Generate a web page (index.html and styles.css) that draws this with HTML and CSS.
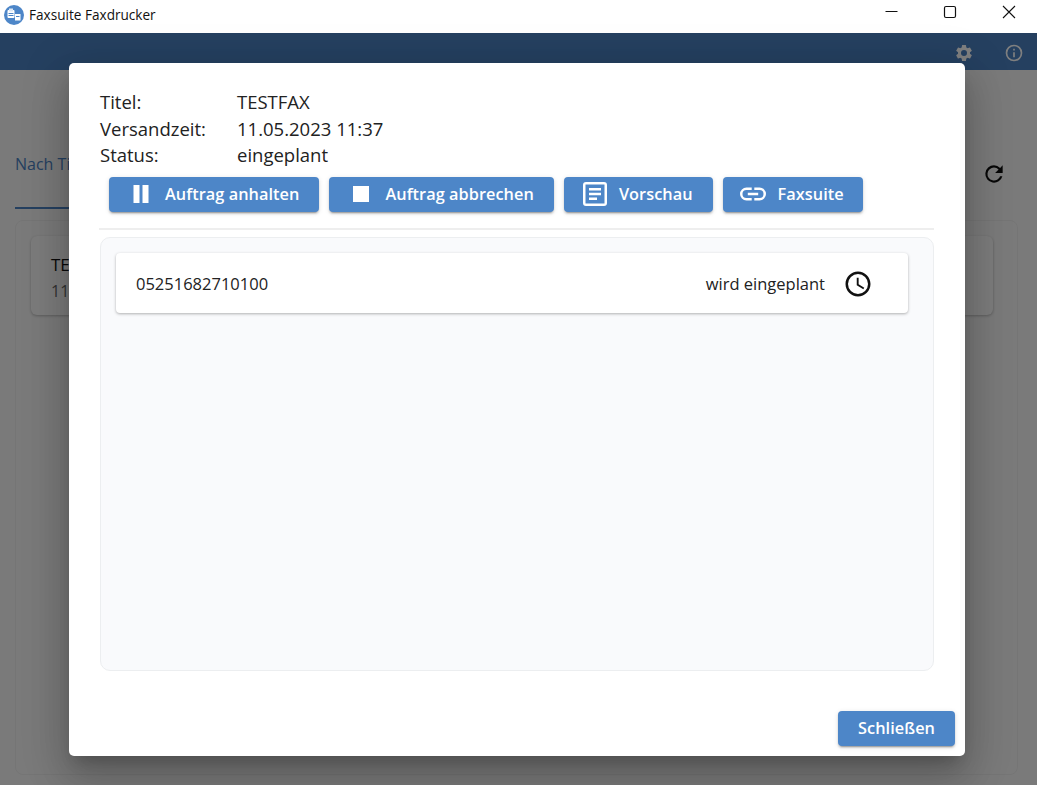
FILE: index.html
```html
<!DOCTYPE html>
<html lang="de">
<head>
<meta charset="utf-8">
<title>Faxsuite Faxdrucker</title>
<link rel="stylesheet" href="styles.css">
</head>
<body>
<div class="titlebar">
  <svg class="app-icon" viewBox="0 0 20 20"><circle cx="10" cy="10" r="10" fill="#4d86c8"/><rect x="3.5" y="5" width="7" height="8" rx="1" fill="#fff"/><rect x="5" y="3.5" width="4" height="3" fill="#dfe9f5"/><rect x="4.5" y="8" width="5" height="1" fill="#4d86c8"/><rect x="4.5" y="10" width="5" height="1" fill="#4d86c8"/><rect x="11" y="9" width="5.5" height="6.5" fill="#fff"/><rect x="12" y="11" width="3.5" height="1" fill="#4d86c8"/></svg>
  <span class="app-title">Faxsuite Faxdrucker</span>
  <div class="win-controls">
    <svg class="win-btn" viewBox="0 0 46 32"><path d="M17.5 13.5h12" stroke="#111" stroke-width="1" fill="none"/></svg>
    <svg class="win-btn" viewBox="0 0 46 32"><rect x="17.5" y="8.5" width="11" height="11" rx="1.5" stroke="#111" stroke-width="1.2" fill="none"/></svg>
    <svg class="win-btn" viewBox="0 0 46 32"><path d="M17 8l12 12M29 8L17 20" stroke="#111" stroke-width="1.1" fill="none"/></svg>
  </div>
</div>
<div class="app">
  <header class="appbar">
    <svg class="bar-icon" viewBox="0 0 24 24"><path fill="#fff" d="M19.14 12.94c.04-.3.06-.61.06-.94s-.02-.64-.07-.94l2.03-1.58a.49.49 0 0 0 .12-.61l-1.92-3.32a.49.49 0 0 0-.59-.22l-2.39.96a7 7 0 0 0-1.62-.94l-.36-2.54a.48.48 0 0 0-.48-.41h-3.84a.47.47 0 0 0-.47.41l-.36 2.54c-.59.24-1.13.57-1.62.94l-2.39-.96a.48.48 0 0 0-.59.22L2.74 8.87a.47.47 0 0 0 .12.61l2.03 1.58c-.05.3-.09.63-.09.94s.02.64.07.94l-2.03 1.58a.49.49 0 0 0-.12.61l1.92 3.32c.12.22.37.29.59.22l2.39-.96c.5.38 1.03.7 1.62.94l.36 2.54c.05.24.24.41.48.41h3.84c.24 0 .44-.17.47-.41l.36-2.54c.59-.24 1.13-.56 1.62-.94l2.39.96c.22.08.47 0 .59-.22l1.92-3.32a.47.47 0 0 0-.12-.61l-2.01-1.58zM12 15.6A3.6 3.6 0 1 1 12 8.4a3.6 3.6 0 0 1 0 7.2z"/></svg>
    <svg class="bar-icon" viewBox="0 0 24 24"><path fill="#fff" d="M11 7h2v2h-2zm0 4h2v6h-2zm1-9a10 10 0 1 0 0 20 10 10 0 0 0 0-20zm0 18a8 8 0 1 1 0-16 8 8 0 0 1 0 16z"/></svg>
  </header>
  <main class="page">
    <div class="tabs">
      <div class="tab">Nach Titel</div>
      <svg class="refresh" viewBox="0 0 24 24"><path fill="#111" d="M17.65 6.35A7.96 7.96 0 0 0 12 4a8 8 0 1 0 7.73 10h-2.08A6 6 0 1 1 12 6c1.66 0 3.14.69 4.22 1.78L13 11h7V4l-2.35 2.35z"/></svg>
    </div>
    <section class="outer">
      <div class="job-card">
        <div class="job-title">TESTFAX</div>
        <div class="job-date">11.05.2023</div>
      </div>
    </section>
  </main>
  <div class="backdrop"></div>
  <div class="dialog">
    <div class="meta">
      <span>Titel:</span><span>TESTFAX</span>
      <span>Versandzeit:</span><span>11.05.2023 11:37</span>
      <span>Status:</span><span>eingeplant</span>
    </div>
    <div class="actions">
      <button class="btn btn-long"><svg class="btn-icon" viewBox="0 0 24 24"><path fill="#fff" d="M4.5 3h6v18h-6zM13.5 3h6v18h-6z"/></svg>Auftrag anhalten</button>
      <button class="btn btn-long"><svg class="btn-icon" viewBox="0 0 24 24"><path fill="#fff" d="M4 4h16v16H4z"/></svg>Auftrag abbrechen</button>
      <button class="btn"><svg class="btn-icon" viewBox="0 0 24 24"><path fill="#fff" d="M21 0H3a3 3 0 0 0-3 3v18a3 3 0 0 0 3 3h18a3 3 0 0 0 3-3V3a3 3 0 0 0-3-3zm.5 21.5h-19v-19h19v19zM6 6h12v2.6H6zm0 4.7h12v2.6H6zm0 4.7h8V18H6z"/></svg>Vorschau</button>
      <button class="btn btn-link"><svg class="btn-icon link-icon" viewBox="2 2 20 20"><path fill="#fff" d="M3.9 12A3.1 3.1 0 0 1 7 8.9h4V7H7a5 5 0 0 0 0 10h4v-1.9H7A3.1 3.1 0 0 1 3.9 12zM8 13h8v-2H8v2zm9-6h-4v1.9h4a3.1 3.1 0 0 1 0 6.2h-4V17h4a5 5 0 0 0 0-10z"/></svg>Faxsuite</button>
    </div>
    <hr class="rule">
    <div class="recipients">
      <div class="recipient">
        <span class="number">05251682710100</span>
        <span class="state">wird eingeplant</span>
        <svg class="clock" viewBox="0 0 24 24"><path fill="#111" d="M11.99 2C6.47 2 2 6.48 2 12s4.47 10 9.99 10C17.52 22 22 17.52 22 12S17.52 2 11.99 2zM12 20a8 8 0 1 1 0-16 8 8 0 0 1 0 16zm.5-13H11v6l5.25 3.15.75-1.23-4.5-2.67V7z"/></svg>
      </div>
    </div>
    <div class="footer">
      <button class="btn close">Schließen</button>
    </div>
  </div>
</div>
</body>
</html>
```
FILE: styles.css
```css
* { box-sizing: border-box; }
html, body { margin: 0; height: 100%; overflow: hidden; }
body { font-family: "Open Sans", "Noto Sans", sans-serif; color: #222; background: #fff; display: flex; flex-direction: column; }

.titlebar { height: 33px; flex: none; display: flex; align-items: center; padding-left: 4px; background: #fff; }
.app-icon { width: 20px; height: 20px; margin-top: -4px; }
.app-title { margin-left: 5px; margin-top: -4px; font-size: 13.6px; color: #111; }
.win-controls { margin-left: auto; display: flex; gap: 13px; padding-right: 5px; margin-top: -5px; }
.win-btn { width: 46px; height: 32px; display: block; }

.app { position: relative; flex: 1; display: flex; flex-direction: column; min-height: 0; background: #f5f5f5; }
.appbar { height: 37px; flex: none; background: #4a80c0; display: flex; justify-content: flex-end; align-items: center; gap: 30px; padding: 3px 13px 0 0; }
.bar-icon { width: 20px; height: 20px; display: block; }

.page { flex: 1; display: flex; flex-direction: column; padding: 0 19px 10px 15px; min-height: 0; }
.tabs { height: 150px; flex: none; display: flex; justify-content: space-between; align-items: flex-start; padding-top: 81px; }
.tab { width: 120px; height: 58px; padding-top: 2px; font-size: 16px; color: #4a80c0; border-bottom: 2px solid #4a80c0; }
.refresh { width: 26px; height: 26px; margin: 10px 11px 0 0; }
.outer { flex: 1; border: 1px solid #ebebeb; border-radius: 8px; padding: 15px 24px 15px 15px; }
.job-card { height: 79px; background: #f8f8f8; border-radius: 6px; box-shadow: 0 1px 3px rgba(0,0,0,.25); padding: 16px 20px; }
.job-title, .job-date { white-space: nowrap; line-height: 26px; }
.job-title { font-size: 17px; color: #111; }
.job-date { font-size: 16px; color: #666; }

.backdrop { position: absolute; inset: 0; background: rgba(0,0,0,.5); }
.dialog { position: absolute; left: 69px; top: 30px; width: 896px; height: 693px; background: #fff; border-radius: 5px; padding: 26px 31px 10px 30px; display: flex; flex-direction: column; box-shadow: 0 11px 15px -7px rgba(0,0,0,.2), 0 24px 38px 3px rgba(0,0,0,.14), 0 9px 46px 8px rgba(0,0,0,.12); }

.meta { display: grid; grid-template-columns: 137px 1fr; padding-left: 1px; font-size: 18.5px; line-height: 26.5px; color: #222; }
.actions { display: flex; gap: 10px; padding-left: 10px; margin-top: 8px; }
.btn { height: 35px; border: 0; border-radius: 4px; background: #4d86c8; color: #fff; font: 600 16.3px/1 "Open Sans", "Noto Sans", sans-serif; letter-spacing: .06px; display: inline-flex; align-items: center; padding: 0 20px 0 19px; box-shadow: 0 3px 1px -2px rgba(0,0,0,.2), 0 2px 2px 0 rgba(0,0,0,.14), 0 1px 5px 0 rgba(0,0,0,.12); }
.btn-long { padding-left: 20px; }
.btn-link { padding-right: 19px; }
.btn-icon { width: 24px; height: 24px; margin-right: 12px; flex: none; }
.link-icon { width: 26px; height: 26px; margin-left: -2px; }
.rule { width: 100%; height: 2px; margin: 16px 0 7px; border: 0; background: #eee; }
.recipients { height: 434px; flex: none; margin-left: 1px; background: #f9fafc; border: 1px solid #eceef0; border-radius: 10px; padding: 15px 25px 0 15px; }
.recipient { height: 60px; background: #fff; border-radius: 4px; box-shadow: 0 1px 3px rgba(0,0,0,.3); display: flex; align-items: center; padding: 2px 36px 0 20px; font-size: 16.5px; color: #222; }
.state { margin-left: auto; margin-right: 18px; }
.clock { width: 30px; height: 30px; margin-right: -1px; }
.footer { margin-top: auto; display: flex; justify-content: flex-end; margin-right: -21px; }
.btn.close { width: 117px; justify-content: center; padding: 0; }
```
